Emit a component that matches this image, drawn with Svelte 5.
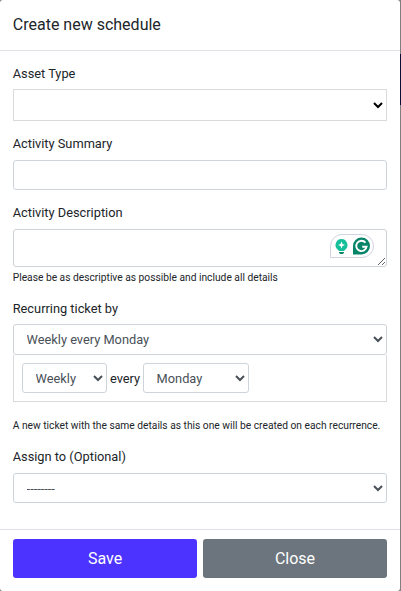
<script>
  let recurrence = $state('Weekly every Monday');
  let summary = $state('');
</script>

<div class="backdrop">
  <div class="modal">
    <header><h5>Create new schedule</h5></header>
    <main>
      <label for="asset">Asset Type</label>
      <select id="asset" class="plain"><option></option></select>

      <label for="summary" class="l2">Activity Summary</label>
      <input id="summary" class="control" bind:value={summary} />

      <label for="description" class="l3">Activity Description</label>
      <div class="area">
        <textarea id="description" class="control"></textarea>
        <div class="pill">
          <svg width="44" height="24" viewBox="0 0 44 24">
            <path d="M.5 23.5V12A11.5 11.5 0 0 1 12 .5H32a11.5 11.5 0 0 1 0 23Z" fill="#fff" stroke="#d2d3e0" />
            <path d="M11.5 5a6 6 0 0 0-3.4 10.9c.5.4.7.6.7 1.1h5.4c0-.5.2-.7.7-1.1A6 6 0 0 0 11.5 5Z" fill="#15bf9a" />
            <path d="M9 18h5v.6a1.600 1.600 0 0 1-1.600 1.400h-1.800A1.600 1.600 0 0 1 9 18.600Z" fill="#078568" />
            <path d="m11.500 7.500 1 2.500 2.500 1-2.500 1-1 2.500-1-2.500-2.500-1 2.500-1Z" fill="#fff" />
            <path d="M23 20.500V12a8.500 8.500 0 1 1 8.500 8.500Z" fill="#078568" />
            <path d="M35.500 8.600A5.200 5.200 0 1 0 36.600 12.700H32.200" fill="none" stroke="#fff" stroke-width="1.900" />
          </svg>
        </div>
      </div>
      <small>Please be as descriptive as possible and include all details</small>

      <label for="recurring" class="l4">Recurring ticket by</label>
      <select id="recurring" class="control tall"><option>{recurrence}</option></select>
      <div class="rule">
        <select class="control freq" aria-label="Frequency"><option>Weekly</option></select>
        <span>every</span>
        <select class="control day" aria-label="Day"><option>Monday</option></select>
      </div>
      <small class="note">A new ticket with the same details as this one will be created on each recurrence.</small>

      <label for="assign" class="l5">Assign to (Optional)</label>
      <select id="assign" class="control"><option>--------</option></select>
    </main>
    <footer>
      <button class="save">Save</button>
      <button class="close">Close</button>
    </footer>
  </div>
</div>

<style>
  * { box-sizing: border-box; }
  .backdrop {
    width: 401px;
    height: 591px;
    padding-right: 1px;
    background: linear-gradient(#808080 54px, #0b0f33 54px, #0b0f33 105px, #808080 105px);
    font-family: Roboto, sans-serif;
    color: #212529;
    overflow: hidden;
  }
  .modal {
    display: flex;
    flex-direction: column;
    height: 591px;
    background: #fff;
    border-radius: 3px;
  }
  header {
    height: 51px;
    padding: 13px 12.8px 0;
    border-bottom: 1px solid #dee2e6;
  }
  h5 {
    margin: 0;
    font-size: 16px;
    line-height: 24px;
    font-weight: 400;
  }
  main {
    display: flex;
    flex-direction: column;
    height: 478px;
    padding: 13px 13px 0;
  }
  label {
    height: 20px;
    margin-left: -0.3px;
    margin-bottom: 5px;
    font-size: 12.8px;
    line-height: 20px;
  }
  .l2 { margin-top: 13px; margin-bottom: 6px; }
  .l3 { margin-top: 13px; margin-bottom: 6px; }
  .l4 { margin-top: 13px; }
  .l5 { margin-top: 13px; margin-bottom: 6px; }
  .plain {
    height: 32px;
    border: 1px solid #d9dadb;
    border-radius: 0;
    background: #fff;
    color: #000;
  }
  .control {
    display: block;
    height: 30px;
    padding: 0 9px 0 8.6px;
    border: 1px solid #ced4da;
    border-radius: 3px;
    background: #fff;
    color: #495057;
    font: 12.8px Roboto, sans-serif;
  }
  .tall { height: 31px; flex: none; }
  .area { position: relative; height: 38px; }
  .area textarea {
    width: 100%;
    height: 38px;
    margin: 0;
    resize: vertical;
  }
  .pill {
    position: absolute;
    left: 317px;
    top: 5px;
    height: 24px;
  }
  small {
    height: 19px;
    margin-left: -0.3px;
    font-size: 10.24px;
    line-height: 21px;
    white-space: nowrap;
  }
  .rule {
    display: flex;
    align-items: flex-start;
    height: 47px;
    padding: 8px 8px 0;
    border: 1px solid #d9dadb;
    border-top: 0;
    font-size: 12.8px;
  }
  .rule span {
    width: 36px;
    line-height: 31px;
    text-align: center;
  }
  .freq { width: 85px; }
  .day { width: 106px; }
  .note { margin-top: 14px; height: 18px; line-height: 19px; }
  footer {
    display: flex;
    gap: 6px;
    height: 62px;
    padding: 9px 13px 0;
    border-top: 1px solid #dee2e6;
  }
  button {
    flex: 1;
    height: 39px;
    padding: 0;
    border: 0;
    border-radius: 3px;
    color: #fff;
    font: 16px Roboto, sans-serif;
  }
  .save { background: #4c33ff; }
  .close { background: #6c757d; }
</style>
